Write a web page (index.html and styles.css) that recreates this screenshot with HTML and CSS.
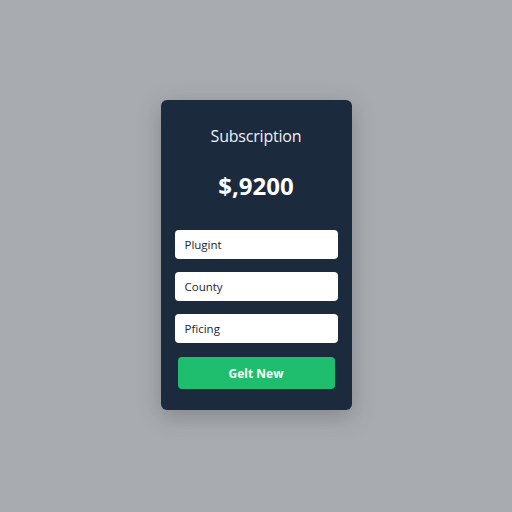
FILE: index.html
```html
<!DOCTYPE html>
<html>
<head>
<meta charset="utf-8">
<link rel="stylesheet" href="styles.css">
</head>
<body>
<div class="card">
  <div class="title">Subscription</div>
  <div class="price">$,9200</div>
  <div class="fields">
    <div class="field">Plugint</div>
    <div class="field">County</div>
    <div class="field">Pficing</div>
  </div>
  <button class="cta">Gelt New</button>
</div>
</body>
</html>
```
FILE: styles.css
```css
html, body {
  margin: 0;
  height: 100%;
}
body {
  box-sizing: border-box;
  padding-bottom: 2px;
  background: #a8acb0;
  display: flex;
  align-items: center;
  justify-content: center;
  font-family: "Open Sans", "Noto Sans", sans-serif;
}
.card {
  width: 191px;
  height: 310px;
  box-sizing: border-box;
  background: #1b2a3d;
  border-radius: 6px;
  padding: 24px 14px 0;
  display: flex;
  flex-direction: column;
  align-items: stretch;
  box-shadow: 0 6px 22px rgba(60, 66, 74, 0.35);
}
.title {
  color: #eef1f4;
  font-size: 16px;
  line-height: 24px;
  text-align: center;
  letter-spacing: -0.2px;
}
.price {
  color: #ffffff;
  font-size: 24px;
  font-weight: 700;
  line-height: 32px;
  text-align: center;
  margin-top: 22px;
}
.fields {
  display: flex;
  flex-direction: column;
  gap: 13px;
  margin-top: 28px;
}
.field {
  height: 29px;
  background: #ffffff;
  border-radius: 4px;
  padding-left: 10px;
  display: flex;
  align-items: center;
  font-size: 11.5px;
  color: #1e2630;
}
.cta {
  margin: 14px 3px 0;
  height: 32px;
  border: none;
  border-radius: 4px;
  background: #1fbe6e;
  color: #f4fff8;
  font-family: "Open Sans", "Noto Sans", sans-serif;
  font-weight: 700;
  font-size: 12px;
  padding: 0;
}
```
